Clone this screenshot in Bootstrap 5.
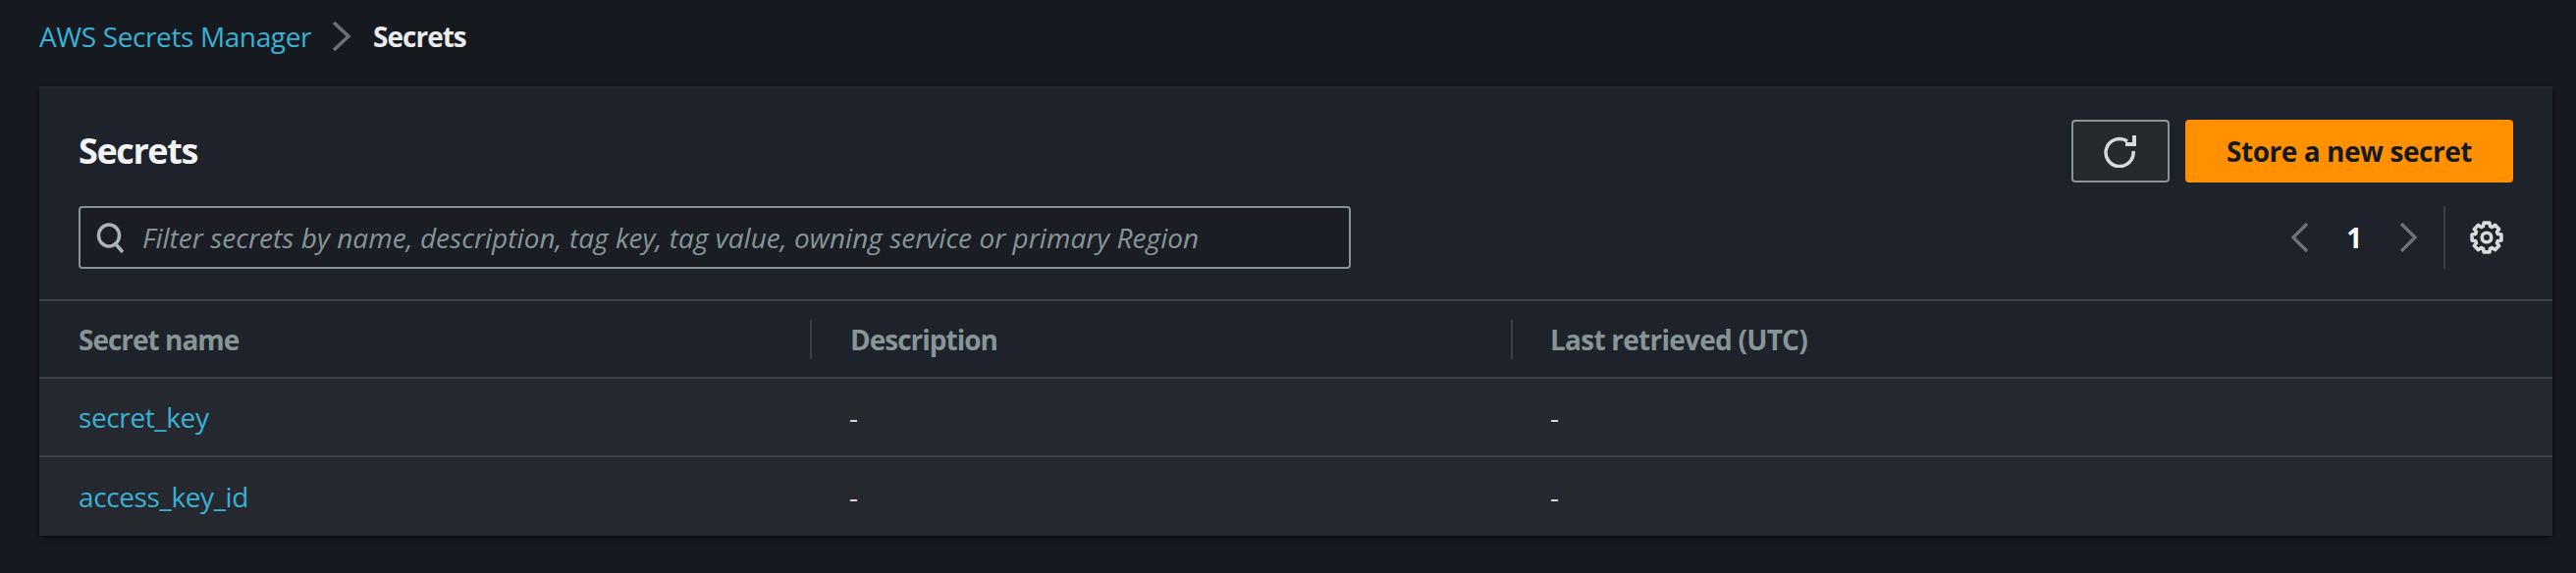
<!DOCTYPE html>
<html lang="en">
<head>
  <meta charset="UTF-8"><meta name="viewport" content="width=device-width, initial-scale=1">
  <title>Secrets – AWS Secrets Manager</title>
  <link href="https://cdn.jsdelivr.net/npm/bootstrap@5.3.0/dist/css/bootstrap.min.css" rel="stylesheet">
  <style>
    html,body{height:100%}
    body{background:#16191f;font-family:"Open Sans","Liberation Sans",sans-serif;font-size:28px;line-height:40px;letter-spacing:-.38px;color:#d5dbdb;overflow:hidden}
    .page-wrap{padding:17px 24px 0 40px}
    .crumb-row{height:40px;margin-bottom:31px}
    .crumb-row a,.name-link{color:#39b1d4;text-decoration:none}
    .crumb-sep{width:22px;height:30px;margin:0 21px 0 20px;color:#687078}
    .crumb-now{font-weight:700;letter-spacing:-1px;color:#e9ebed}
    .secrets-panel{background:#1e222a;border-top:2px solid #262a31;box-shadow:0 2px 4px rgba(0,0,0,.5)}
    .panel-head{padding:32px 40px 0;height:217px;border-bottom:2px solid #3b4049}
    .panel-title{font-size:36px;line-height:44px;font-weight:700;letter-spacing:-1.4px;color:#f2f3f3;margin:0}
    .top-line{height:64px}
    .refresh-btn{width:100px;height:64px;background:#252a2f;border:2px solid #879596;border-radius:4px;color:#d5dbdb}
    .refresh-btn:hover{background:#252a2f;border-color:#879596;color:#d5dbdb}
    .store-btn{width:334px;height:64px;margin-left:16px;background:#ff9100;border:0;border-radius:4px;color:#16191f;font-size:28px;font-weight:700;line-height:40px;letter-spacing:-.45px}
    .store-btn:hover{background:#ff9100;color:#16191f}
    .filter-line{height:64px;margin-top:24px}
    .filter-box{width:1296px;height:64px;background:#1a1d24;border:2px solid #879596;border-radius:4px;padding:0 18px 0 16px}
    .filter-box input{flex:1;background:none;border:0;outline:0;padding:0;margin-left:17px;font-size:28px;line-height:40px;letter-spacing:.03px;color:#d5dbdb;font-style:italic;font-family:inherit}
    .filter-box input::placeholder{color:#879596;opacity:1}
    .pager-num{width:40px;text-align:center;font-weight:700;color:#fff;margin:0 25px}
    .pager-tools{padding-left:20px;margin-left:26px;margin-right:5px;border-left:2px solid #3b4049;height:64px}
    .gear-wrap{width:44px;color:#d5dbdb}
    .secrets-table{table-layout:fixed;width:100%;margin:0;--bs-table-bg:transparent;--bs-table-color:#d5dbdb;--bs-table-border-color:#3b4049}
    .secrets-table th{position:relative;height:78px;padding:0 0 0 40px;font-weight:700;letter-spacing:-1px;color:#879596;vertical-align:middle;border-bottom:2px solid #3b4049;background:#1e222a}
    .secrets-table th+th::before{content:"";position:absolute;left:0;top:19px;height:40px;border-left:2px solid #3b4049}
    .secrets-table td{height:80px;padding:0 0 0 40px;vertical-align:middle;background:#25282e;border-bottom:2px solid #3b4049;color:#d5dbdb}
    .secrets-table tr:last-child td{height:81px;border-bottom:0}
    .col-name{width:785px}
    .secrets-table .col-desc{width:714px;padding-left:41px}
    .secrets-table .col-last{letter-spacing:-.75px}
  </style>
</head>
<body>
<div class="page-wrap">
  <nav class="crumb-row d-flex align-items-center">
    <a href="#">AWS Secrets Manager</a>
    <svg class="crumb-sep" viewBox="0 0 22 30" fill="none" stroke="currentColor" stroke-width="3.5"><path d="M3 1l15 14L3 29"/></svg>
    <span class="crumb-now">Secrets</span>
  </nav>
  <div class="secrets-panel">
    <div class="panel-head">
      <div class="top-line d-flex align-items-center justify-content-between">
        <h1 class="panel-title">Secrets</h1>
        <div class="d-flex">
          <button class="btn refresh-btn d-flex align-items-center justify-content-center p-0" aria-label="Refresh">
            <svg width="36" height="34" viewBox="0 0 36 34" fill="none" stroke="currentColor" stroke-width="3.5"><path d="M25 7A14 14 0 1 0 31 17"/><path d="M32 1v9H23" stroke-width="4"/></svg>
          </button>
          <button class="btn store-btn p-0">Store a new secret</button>
        </div>
      </div>
      <div class="filter-line d-flex align-items-center justify-content-between">
        <div class="filter-box d-flex align-items-center">
          <svg width="30" height="32" viewBox="0 0 30 32" fill="none" stroke="#a9b5b6" stroke-width="3.5"><ellipse cx="13" cy="14" rx="10.5" ry="11"/><path d="M20 23l7 8"/></svg>
          <input type="text" placeholder="Filter secrets by name, description, tag key, tag value, owning service or primary Region">
        </div>
        <div class="d-flex align-items-center">
          <svg width="20" height="30" viewBox="0 0 20 30" fill="none" stroke="#687078" stroke-width="3.5"><path d="M17 1L3 15l14 14"/></svg>
          <span class="pager-num">1</span>
          <svg width="20" height="30" viewBox="0 0 20 30" fill="none" stroke="#687078" stroke-width="3.5"><path d="M3 1l14 14L3 29"/></svg>
          <div class="pager-tools d-flex align-items-center">
            <div class="gear-wrap d-flex justify-content-center">
              <svg width="34" height="34" viewBox="0 0 32 32" fill="none" stroke="currentColor" stroke-width="3.4" stroke-linejoin="round"><circle cx="16" cy="16" r="4.5"/><path id="gearOutline"/></svg>
            </div>
          </div>
        </div>
      </div>
    </div>
    <table class="table secrets-table">
      <thead>
        <tr><th class="col-name">Secret name</th><th class="col-desc">Description</th><th class="col-last">Last retrieved (UTC)</th></tr>
      </thead>
      <tbody>
        <tr><td><a class="name-link" href="#">secret_key</a></td><td>-</td><td>-</td></tr>
        <tr><td><a class="name-link" href="#">access_key_id</a></td><td>-</td><td>-</td></tr>
      </tbody>
    </table>
  </div>
</div>
<script src="https://cdn.jsdelivr.net/npm/bootstrap@5.3.0/dist/js/bootstrap.bundle.min.js"></script>
<script>
  // 8 tooth cog outline
  const pts = [];
  for (let k = 0; k < 8; k++) {
    const a = k * 45;
    [[14.3, a - 11], [14.3, a + 11], [11.2, a + 17], [11.2, a + 28]].forEach(([r, d]) => {
      const t = d * Math.PI / 180;
      pts.push((16 + r * Math.cos(t)).toFixed(2) + " " + (16 + r * Math.sin(t)).toFixed(2));
    });
  }
  document.getElementById("gearOutline").setAttribute("d", "M" + pts.join("L") + "Z");
</script>
</body>
</html>
